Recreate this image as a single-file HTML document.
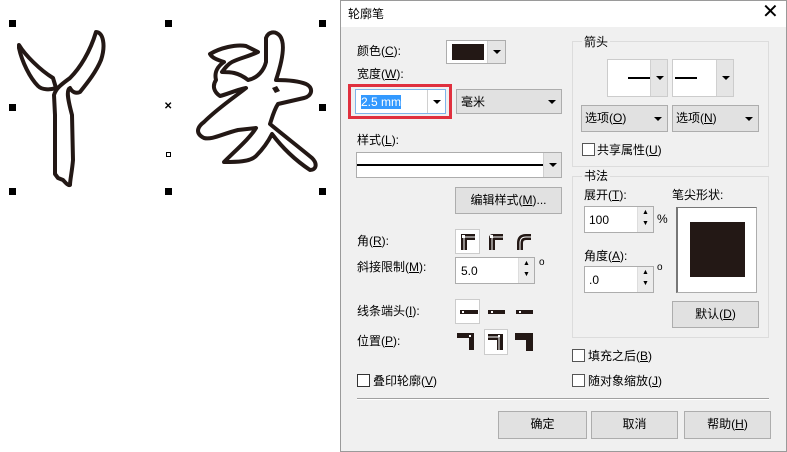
<!DOCTYPE html>
<html><head><meta charset="utf-8"><style>
*{margin:0;padding:0;box-sizing:border-box}
body{width:787px;height:452px;background:#fff;position:relative;overflow:hidden;font-family:"Liberation Sans","Noto Sans CJK SC",sans-serif;font-size:12px;color:#000}
.a{position:absolute}
.t{position:absolute;white-space:nowrap;line-height:14px}
.dlg{left:340px;top:0;width:447px;height:452px;background:#f0f0f0;border:1px solid #9a9a9a}
.title{left:341px;top:1px;width:445px;height:26px;background:#fff}
.box{position:absolute;background:#fff;border:1px solid #adadad}
.btn{position:absolute;background:#e1e1e1;border:1px solid #adadad;text-align:center;line-height:24px}
.dd{position:absolute;background:#e5e5e5;border-left:1px solid #d0d0d0;top:0;bottom:0;right:0;width:18px}
.dd:after{content:"";position:absolute;left:5px;top:50%;margin-top:-2px;border-left:4px solid transparent;border-right:4px solid transparent;border-top:4px solid #000}
.cb{position:absolute;width:13px;height:13px;background:#fff;border:1px solid #333}
.grp{position:absolute;border:1px solid #dcdcdc}
.sp{position:absolute;right:0;top:0;bottom:0;width:16px;background:#ececec;border-left:1px solid #ddd;font-size:7px;text-align:center;line-height:11px}
.hd{position:absolute;background:#000;width:7px;height:7px}
u{text-decoration:underline}
</style></head><body>
<svg class="a" style="left:0;top:0" width="340" height="200">
<g fill="#fff" stroke="#231815" stroke-width="4" stroke-linejoin="round">
<path d="M19,45 C25,55 40,70 53,78 L56,88 C50,90 42,90 38,86 C30,78 22,62 19,48 Z"/>
<path d="M96,32 C103,32 106,45 101,60 C96,72 88,82 80,92 C76,94 72,92 70,88 C66,90 68,100 72,115 L73,160 C72,172 70,180 70,185 C68,186 65,182 63,180 L58,178 L55,174 L55,115 L54,95 C56,88 62,84 70,78 C80,68 90,52 96,32 Z"/>
<path d="M210,54 C220,48 236,44 246,46 L258,52 C250,56 240,58 232,62 C228,64 225,68 222,72 C230,72 238,72 248,80 C258,78 264,70 266,62 L266,38 C268,32 275,30 280,36 C286,44 282,62 276,80 C282,80 296,80 306,84 C314,88 312,96 304,98 L278,104 C274,110 272,118 270,124 C282,134 300,148 312,158 C318,164 316,170 310,170 C298,162 284,150 272,134 C268,142 262,150 256,156 C250,162 236,162 224,162 C236,150 250,138 256,128 L238,130 C222,134 212,140 204,138 C196,134 196,128 204,122 C218,108 236,96 246,88 C236,90 228,94 220,96 C214,92 212,86 216,80 C214,72 218,66 224,62 C218,60 212,58 210,54 Z"/>
</g>
<path d="M272,88 l5,-2 l3,5 l-5,2 z" fill="#231815"/>
</svg>
<div class="hd" style="left:9px;top:20px"></div><div class="hd" style="left:165px;top:20px"></div><div class="hd" style="left:319px;top:20px"></div>
<div class="hd" style="left:9px;top:104px"></div><div class="hd" style="left:319px;top:104px"></div>
<div class="hd" style="left:9px;top:188px"></div><div class="hd" style="left:165px;top:188px"></div><div class="hd" style="left:319px;top:188px"></div>
<div class="t" style="left:164px;top:100px;font-size:10px;font-weight:bold">✕</div>
<div class="a" style="left:166px;top:152px;width:5px;height:5px;border:1px solid #000;background:#fff"></div>

<div class="a dlg"></div>
<div class="a title"></div>
<div class="t" style="left:348px;top:7px">轮廓笔</div>
<div class="t" style="left:762px;top:2px;font-size:20px;line-height:20px">✕</div>

<div class="t" style="left:357px;top:44px">颜色(<u>C</u>):</div>
<div class="box" style="left:446px;top:40px;width:60px;height:24px;border-color:#adadad"><div class="a" style="left:5px;top:3px;width:32px;height:16px;background:#231815"></div><div class="dd"></div></div>
<div class="t" style="left:357px;top:67px">宽度(<u>W</u>):</div>
<div class="a" style="left:348px;top:84px;width:104px;height:35px;border:3px solid #e0303e"></div>
<div class="box" style="left:355px;top:89px;width:91px;height:25px;border-color:#7eb4ea"><div class="a" style="left:5px;top:5px;height:14px;width:40px;background:#3399ff"></div><div class="t" style="left:5px;top:5px;color:#fff">2.5 mm</div><div class="dd" style="background:#fff"></div></div>
<div class="btn" style="left:456px;top:89px;width:106px;height:25px;text-align:left;padding-left:4px">毫米<div class="dd" style="background:none;border:none"></div></div>
<div class="t" style="left:357px;top:133px">样式(<u>L</u>):</div>
<div class="box" style="left:356px;top:152px;width:206px;height:26px"><div class="a" style="left:0;top:11px;width:186px;height:2px;background:#000"></div><div class="dd"></div></div>
<div class="btn" style="left:455px;top:187px;width:107px;height:27px">编辑样式(<u>M</u>)...</div>

<div class="t" style="left:357px;top:234px">角(<u>R</u>):</div>
<svg class="a" style="left:450px;top:225px" width="90" height="135">
<rect x="5.5" y="4.5" width="24" height="24" fill="#fff" stroke="#ccc"/>
<g fill="#231815">
<path d="M11,9h14v6h-8v10h-6z"/>
<path d="M39,25v-12q0,-4 4,-4h10v6h-8v10z"/>
<path d="M67,25v-7q0,-9 9,-9h5v6h-5q-3,0 -3,3v7z"/>
</g>
<g fill="none" stroke="#fff" stroke-width="1">
<path d="M14,25v-13h11"/><path d="M42,25v-11q0,-2 2,-2h9"/><path d="M70,25v-7q0,-6 6,-6h5"/>
</g>
<g fill="#fff"><rect x="12" y="10" width="3" height="3"/><rect x="40" y="10" width="3" height="3"/></g>
<rect x="5.5" y="74.5" width="24" height="24" fill="#fff" stroke="#ccc"/>
<g fill="#231815"><rect x="10" y="85" width="18" height="4"/><rect x="38" y="85" width="17" height="4"/><rect x="66" y="85" width="17" height="4"/></g>
<g fill="#fff"><rect x="12" y="86" width="2" height="2"/><rect x="41" y="86" width="2" height="2"/><rect x="69" y="86" width="2" height="2"/></g>
<rect x="34.5" y="104.5" width="23" height="25" fill="#fff" stroke="#ccc"/>
<g fill="#231815">
<path d="M7,108h17v17h-5v-12h-12z"/>
<path d="M38,109h15v16h-6v-10h-9z"/>
<path d="M65,108h18v18h-7v-11h-11z"/>
</g>
<g fill="none" stroke="#fff"><path d="M38,112h11v13"/></g>
<g fill="#fff"><rect x="19" y="110" width="2" height="2"/><rect x="48" y="110" width="2" height="2"/></g>
</svg>
<div class="t" style="left:357px;top:260px">斜接限制(<u>M</u>):</div>
<div class="box" style="left:455px;top:257px;width:80px;height:27px"><div class="t" style="left:5px;top:6px">5.0</div><div class="sp">▲<br>▼</div></div>
<div class="t" style="left:539px;top:256px;font-size:10px">o</div>
<div class="t" style="left:357px;top:304px">线条端头(<u>I</u>):</div>
<div class="t" style="left:357px;top:334px">位置(<u>P</u>):</div>
<div class="cb" style="left:357px;top:374px"></div>
<div class="t" style="left:373px;top:374px">叠印轮廓(<u>V</u>)</div>
<div class="a" style="left:357px;top:398px;width:412px;height:2px;border-top:1px solid #a0a0a0;border-bottom:1px solid #fff"></div>
<div class="btn" style="left:498px;top:411px;width:89px;height:28px">确定</div>
<div class="btn" style="left:591px;top:411px;width:87px;height:28px">取消</div>
<div class="btn" style="left:684px;top:411px;width:87px;height:28px">帮助(<u>H</u>)</div>

<div class="grp" style="left:572px;top:41px;width:197px;height:126px"></div>
<div class="t" style="left:582px;top:35px;background:#f0f0f0;padding:0 2px">箭头</div>
<div class="box" style="left:607px;top:59px;width:61px;height:38px;border-color:#ccc"><div class="a" style="left:20px;top:17px;width:22px;height:2px;background:#000"></div><div class="dd" style="width:17px"></div></div>
<div class="box" style="left:672px;top:59px;width:62px;height:38px;border-color:#ccc"><div class="a" style="left:2px;top:17px;width:22px;height:2px;background:#000"></div><div class="dd" style="width:17px"></div></div>
<div class="btn" style="left:581px;top:105px;width:87px;height:27px;text-align:left;padding-left:3px">选项(<u>O</u>)<div class="dd" style="background:none;border:none"></div></div>
<div class="btn" style="left:672px;top:105px;width:87px;height:27px;text-align:left;padding-left:3px">选项(<u>N</u>)<div class="dd" style="background:none;border:none"></div></div>
<div class="cb" style="left:582px;top:143px;border-color:#555"></div>
<div class="t" style="left:597px;top:143px">共享属性(<u>U</u>)</div>

<div class="grp" style="left:572px;top:176px;width:197px;height:162px"></div>
<div class="t" style="left:582px;top:169px;background:#f0f0f0;padding:0 2px">书法</div>
<div class="t" style="left:584px;top:188px">展开(<u>T</u>):</div>
<div class="box" style="left:584px;top:206px;width:70px;height:27px"><div class="t" style="left:4px;top:6px">100</div><div class="sp">▲<br>▼</div></div>
<div class="t" style="left:657px;top:212px">%</div>
<div class="t" style="left:672px;top:188px">笔尖形状:</div>
<div class="box" style="left:676px;top:207px;width:81px;height:86px;border-left:2px solid #777;border-top:1px solid #777"><div class="a" style="left:12px;top:14px;width:55px;height:55px;background:#231815"></div></div>
<div class="t" style="left:584px;top:249px">角度(<u>A</u>):</div>
<div class="box" style="left:584px;top:266px;width:70px;height:27px"><div class="t" style="left:4px;top:6px">.0</div><div class="sp">▲<br>▼</div></div>
<div class="t" style="left:657px;top:261px;font-size:10px">o</div>
<div class="btn" style="left:672px;top:301px;width:87px;height:27px">默认(<u>D</u>)</div>
<div class="cb" style="left:572px;top:349px;border-color:#555"></div>
<div class="t" style="left:588px;top:349px">填充之后(<u>B</u>)</div>
<div class="cb" style="left:572px;top:374px;border-color:#555"></div>
<div class="t" style="left:588px;top:374px">随对象缩放(<u>J</u>)</div>
</body></html>
